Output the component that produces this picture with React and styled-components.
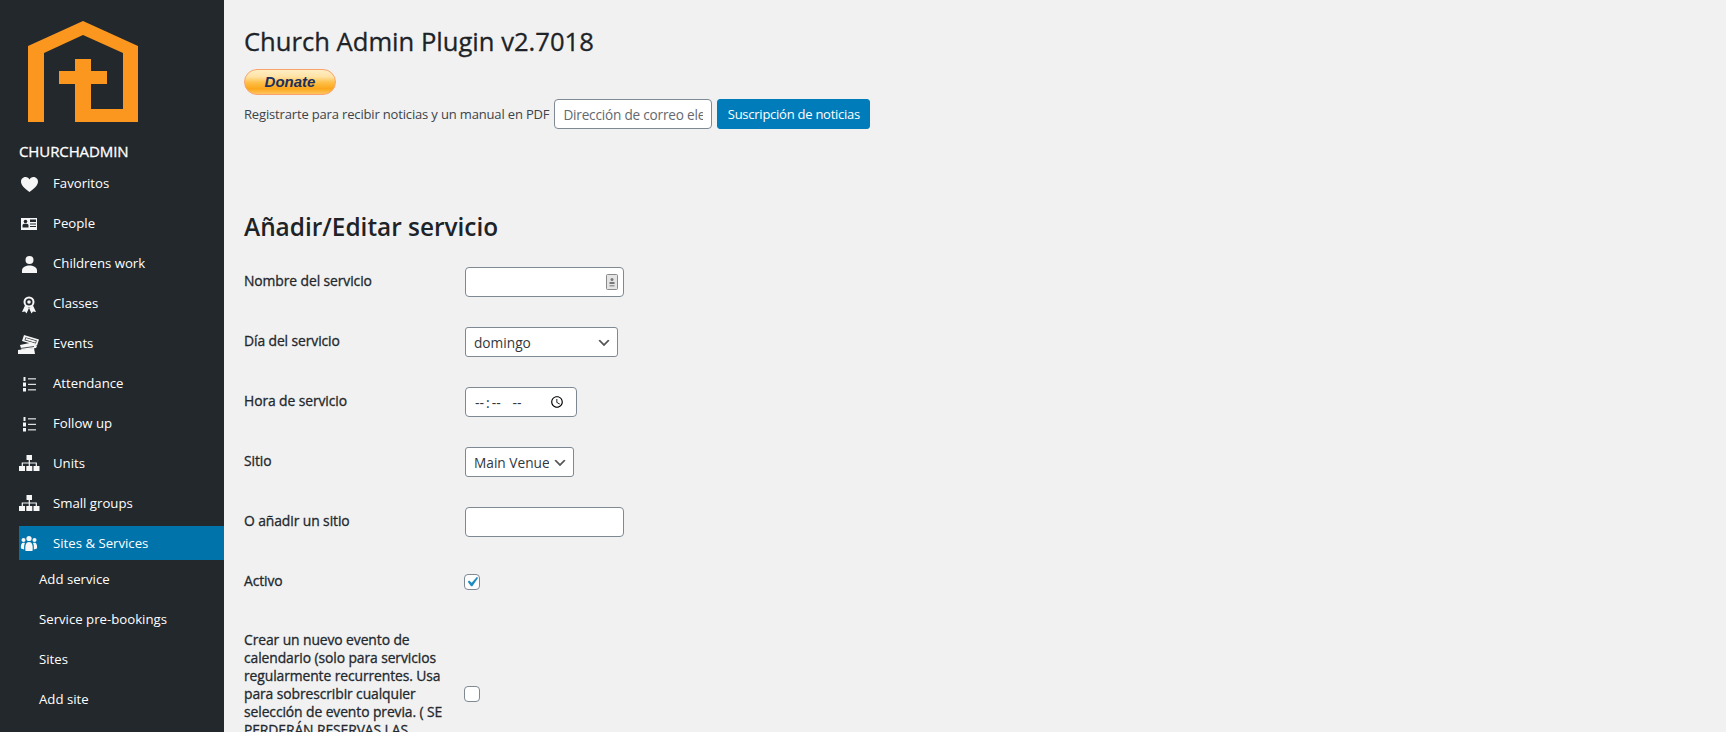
import styled, { createGlobalStyle } from "styled-components";

const GlobalStyle = createGlobalStyle`
  html, body {
    margin: 0;
    height: 100%;
    overflow: hidden;
    background: #f1f1f1;
  }
  body {
    font-family: "Open Sans", "Liberation Sans", sans-serif;
    font-size: 13px;
    color: #1d2327;
  }
  * { box-sizing: border-box; }
`;

const Page = styled.div`
  display: flex;
  height: 732px;
  overflow: hidden;
`;

const Sidebar = styled.nav`
  width: 224px;
  flex: none;
  background: #23282d;
  padding: 21px 0 0 19px;
  color: #fff;
`;

const Logo = styled.svg`
  display: block;
  width: 110px;
  height: 101px;
  margin-left: 9px;
`;

const Brand = styled.div`
  margin-top: 19px;
  height: 20px;
  line-height: 20px;
  font-size: 15px;
  letter-spacing: -0.1px;
  -webkit-text-stroke: 0.3px #fff;
`;

const Menu = styled.ul`
  list-style: none;
  margin: 5px 0 0;
  padding: 0;
`;

const MenuItem = styled.li`
  display: flex;
  align-items: center;
  height: 34px;
  margin-bottom: ${(p) => (p.$active ? "2px" : "6px")};
  padding-left: ${(p) => (p.$sub ? "20px" : "0")};
  background: ${(p) => (p.$active ? "#0073aa" : "transparent")};
  font-size: 13.2px;
`;

const MenuIcon = styled.svg`
  flex: none;
  width: 20px;
  height: 20px;
  margin-right: 14px;
  overflow: visible;
  fill: #f6f6f6;
`;

const Main = styled.main`
  flex: 1;
  padding: 24px 0 0 20px;
`;

const Title = styled.h1`
  margin: 0;
  height: 36px;
  line-height: 36px;
  font-size: 25.6px;
  font-weight: 400;
  -webkit-text-stroke: 0.3px #1d2327;
`;

const Donate = styled.button`
  display: block;
  width: 92px;
  height: 26px;
  margin-top: 9px;
  padding: 0 0 2px;
  border: 1px solid #f9a36b;
  border-radius: 13px;
  background: linear-gradient(#ffeec4 0%, #ffe3a6 28%, #ffc24d 50%, #fba71b 78%, #ffc560 100%);
  font-family: "Liberation Sans", sans-serif;
  font-size: 15px;
  font-style: italic;
  font-weight: 700;
  color: #1c2f5e;
`;

const Newsletter = styled.form`
  display: flex;
  align-items: center;
  height: 30px;
  margin-top: 4px;
  font-size: 13px;
  letter-spacing: -0.16px;
  color: #3c434a;
`;

const EmailInput = styled.input`
  width: 158px;
  height: 30px;
  margin-left: 5px;
  padding: 0 8px;
  border: 1px solid #7e8993;
  border-radius: 4px;
  background: #fff;
  font: inherit;
  font-size: 13.6px;
  letter-spacing: -0.2px;
  &::placeholder { color: #646970; opacity: 1; }
`;

const SubmitButton = styled.button`
  width: 153px;
  height: 30px;
  margin-left: 5px;
  padding: 0;
  border: 1px solid #007cba;
  border-radius: 3px;
  background: #007cba;
  color: #fff;
  font: inherit;
  font-size: 13px;
  letter-spacing: -0.25px;
`;

const Heading = styled.h2`
  margin: 80px 0 22px;
  height: 36px;
  line-height: 36px;
  font-size: 24.4px;
  font-weight: 600;
`;

const Row = styled.div`
  display: flex;
  align-items: flex-start;
  min-height: 30px;
  margin-bottom: ${(p) => p.$gap || "30px"};
`;

const Label = styled.label`
  width: 221px;
  flex: none;
  padding: 5px 19px 5px 0;
  font-size: 13.9px;
  font-weight: 400;
  line-height: 18px;
  letter-spacing: -0.1px;
  color: #23282d;
  -webkit-text-stroke: 0.3px #23282d;
`;

const Field = styled.div`
  position: relative;
  width: 159px;
`;

const TextInput = styled.input`
  display: block;
  width: 159px;
  height: 30px;
  padding: 0 8px;
  border: 1px solid #7e8993;
  border-radius: 4px;
  background: #fff;
`;

const TimeInput = styled.input`
  display: block;
  width: 112px;
  height: 30px;
  padding: 0 8px;
  border: 1px solid #7e8993;
  border-radius: 4px;
  background: #fff;
  font-family: "Open Sans", sans-serif;
  font-size: 14px;
  color: #32373c;
  &::-webkit-datetime-edit-text { padding: 0 1px; }
  &::-webkit-datetime-edit-ampm-field { margin-left: 6px; }
`;

const chevron =
  "url(\"data:image/svg+xml,%3Csvg xmlns='http://www.w3.org/2000/svg' width='20' height='20'%3E%3Cpath d='M5 6l5 5 5-5 2 1-7 7-7-7z' fill='%23555'/%3E%3C/svg%3E\")";

const Select = styled.select`
  display: block;
  width: ${(p) => p.$width};
  height: 30px;
  padding: 0 24px 0 8px;
  border: 1px solid #7e8993;
  border-radius: 3px;
  appearance: none;
  background: #fff ${chevron} no-repeat right 5px top 55% / 16px 16px;
  font-family: "Open Sans", sans-serif;
  font-size: 13.7px;
  color: #32373c;
`;

const check =
  "url(\"data:image/svg+xml,%3Csvg xmlns='http://www.w3.org/2000/svg' viewBox='0 0 20 20'%3E%3Cpath d='M14.83 4.89l1.34.94-5.81 8.38H9.02L5.78 9.67l1.34-1.25 2.57 2.4z' fill='%231e8cbe'/%3E%3C/svg%3E\")";

const Checkbox = styled.input`
  display: block;
  align-self: center;
  width: 16px;
  height: 16px;
  margin: 0 0 0 -1px;
  border: 1px solid #7e8993;
  border-radius: 4px;
  appearance: none;
  background: #fff;
  &:checked {
    background: #fff ${check} no-repeat center / 20px 20px;
  }
`;

const AutofillIcon = styled.svg`
  position: absolute;
  top: 7px;
  right: 6px;
  width: 12px;
  height: 16px;
`;

const HeartIcon = () => (
  <MenuIcon viewBox="0 0 20 20">
    <path d="M10.500 19C6 15.500 2 12.500 2 8.500C2 5.500 4.500 4 6.500 4C8.500 4 9.800 5 10.500 6.500C11.200 5 12.500 4 14.500 4C16.500 4 19 5.500 19 8.500C19 12.500 15 15.500 10.500 19Z" />
  </MenuIcon>
);

const CardIcon = () => (
  <MenuIcon viewBox="0 0 20 20">
    <rect x="2" y="5" width="16" height="12" />
    <g fill="#23282d">
      <circle cx="6.500" cy="8.500" r="1.800" />
      <path d="M3.500 14.500V12.500C3.500 11 5 10.800 6.500 10.800C8 10.800 9.500 11 9.500 12.500V14.500Z" />
      <rect x="11" y="6.500" width="6" height="2.500" />
      <rect x="11" y="10.500" width="6" height="1" />
      <rect x="11" y="13" width="6" height="1" />
    </g>
  </MenuIcon>
);

const UserIcon = () => (
  <MenuIcon viewBox="0 0 20 20">
    <circle cx="10.500" cy="7" r="4" />
    <path d="M3 20V17.500C3 14 7 12.500 10.500 12.500C14 12.500 18 14 18 17.500V20Z" />
  </MenuIcon>
);

const AwardIcon = () => (
  <MenuIcon viewBox="0 0 20 20">
    <circle cx="10" cy="9" r="4.500" fill="none" stroke="#f6f6f6" strokeWidth="2" />
    <circle cx="10" cy="9" r="1.800" />
    <path d="M6 12.500L3 19L6 18.500L7.500 20.500L10 15ZM14 12.500L17 19L14 18.500L12.500 20.500L10 15Z" />
  </MenuIcon>
);

const TicketsIcon = () => (
  <MenuIcon viewBox="0 0 20 20">
    <path d="M5 2L20 6.500L18 12.500L3 8Z" />
    <path d="M6.500 4.200L17.800 7.500L16.800 10.500L5.500 7.200Z" fill="#23282d" />
    <path d="M7 5L17 8L16.300 9.800L6.400 6.800Z" />
    <path d="M1 12L13 9.500L18 13L17 15L2.500 17Z" />
    <path d="M-1 17L15 15L16 21H-1Z" />
    <path d="M1 15.500L15 13.500" stroke="#23282d" strokeWidth="0.800" />
  </MenuIcon>
);

const ListIcon = () => (
  <MenuIcon viewBox="0 0 20 20">
    <rect x="4.500" y="4" width="2" height="4" />
    <rect x="4" y="9.500" width="3" height="4" />
    <rect x="4" y="15" width="3" height="3.500" />
    <rect x="9" y="5.300" width="8" height="1.100" />
    <rect x="9" y="10.800" width="8" height="1.100" />
    <rect x="9" y="16.300" width="8" height="1.100" />
  </MenuIcon>
);

const SitemapIcon = () => (
  <MenuIcon viewBox="0 0 20 20">
    <rect x="7.500" y="2" width="5.500" height="5" />
    <rect x="0" y="13" width="6" height="5" />
    <rect x="7.300" y="13" width="6" height="5" />
    <rect x="14.500" y="13" width="6" height="5" />
    <path d="M9.700 7H10.900V9.400H17.900V13H16.700V10.600H10.900V13H9.700V10.600H3.900V13H2.700V9.400H9.700Z" />
  </MenuIcon>
);

const UsersIcon = () => (
  <MenuIcon viewBox="0 0 20 20">
    <circle cx="10" cy="5.500" r="2.600" />
    <circle cx="4.500" cy="7" r="2" />
    <circle cx="15.500" cy="7" r="2" />
    <path d="M6.500 18C5.800 12 7 9 10 9C13 9 14.200 12 13.500 18Z" />
    <path d="M2 15.500C1.500 11.500 2.800 9.700 4.500 9.700C5 9.700 5.500 9.800 6 10C5.200 11.500 5 13.500 5.200 16.500Z" />
    <path d="M18 15.500C18.500 11.500 17.200 9.700 15.500 9.700C15 9.700 14.500 9.800 14 10C14.800 11.500 15 13.500 14.800 16.500Z" />
  </MenuIcon>
);

const menu = [
  [HeartIcon, "Favoritos"],
  [CardIcon, "People"],
  [UserIcon, "Childrens work"],
  [AwardIcon, "Classes"],
  [TicketsIcon, "Events"],
  [ListIcon, "Attendance"],
  [ListIcon, "Follow up"],
  [SitemapIcon, "Units"],
  [SitemapIcon, "Small groups"],
];

const submenu = ["Add service", "Service pre-bookings", "Sites", "Add site"];

export default function App() {
  return (
    <Page>
      <GlobalStyle />
      <Sidebar>
        <Logo viewBox="0 0 110 101">
          <path
            fill="#fb961f"
            d="M55 0L110 25V101H47V63H31V50H47V38H63V50H79V63H63V88H95V32L55 14L16 32V101H0V25Z"
          />
        </Logo>
        <Brand>CHURCHADMIN</Brand>
        <Menu>
          {menu.map(([Icon, label]) => (
            <MenuItem key={label}>
              <Icon />
              {label}
            </MenuItem>
          ))}
          <MenuItem $active>
            <UsersIcon />
            Sites &amp; Services
          </MenuItem>
          {submenu.map((label) => (
            <MenuItem $sub key={label}>
              {label}
            </MenuItem>
          ))}
        </Menu>
      </Sidebar>
      <Main>
        <Title>Church Admin Plugin v2.7018</Title>
        <Donate type="button">Donate</Donate>
        <Newsletter>
          Registrarte para recibir noticias y un manual en PDF
          <EmailInput placeholder="Dirección de correo electrónico" />
          <SubmitButton type="button">Suscripción de noticias</SubmitButton>
        </Newsletter>
        <Heading>Añadir/Editar servicio</Heading>
        <Row>
          <Label>Nombre del servicio</Label>
          <Field>
            <TextInput />
            <AutofillIcon viewBox="0 0 12 16">
              <rect x="0.500" y="0.500" width="11" height="15" rx="1" fill="#e4e4e4" stroke="#8a8a8a" />
              <circle cx="6" cy="5.500" r="1.500" fill="#777" />
              <rect x="3.500" y="8" width="5" height="2" fill="#777" />
              <rect x="3.500" y="11" width="5" height="1.500" fill="#999" />
            </AutofillIcon>
          </Field>
        </Row>
        <Row>
          <Label>Día del servicio</Label>
          <Select $width="153px" defaultValue="domingo">
            <option>domingo</option>
          </Select>
        </Row>
        <Row>
          <Label>Hora de servicio</Label>
          <TimeInput type="time" />
        </Row>
        <Row>
          <Label>Sitio</Label>
          <Select $width="109px" defaultValue="Main Venue">
            <option>Main Venue</option>
          </Select>
        </Row>
        <Row>
          <Label>O añadir un sitio</Label>
          <TextInput />
        </Row>
        <Row $gap="29px">
          <Label>Activo</Label>
          <Checkbox type="checkbox" defaultChecked />
        </Row>
        <Row>
          <Label>
            Crear un nuevo evento de calendario (solo para servicios regularmente recurrentes. Usa
            para sobrescribir cualquier selección de evento previa. ( SE PERDERÁN RESERVAS LAS
            ANTERIORES )
          </Label>
          <Checkbox type="checkbox" />
        </Row>
      </Main>
    </Page>
  );
}
